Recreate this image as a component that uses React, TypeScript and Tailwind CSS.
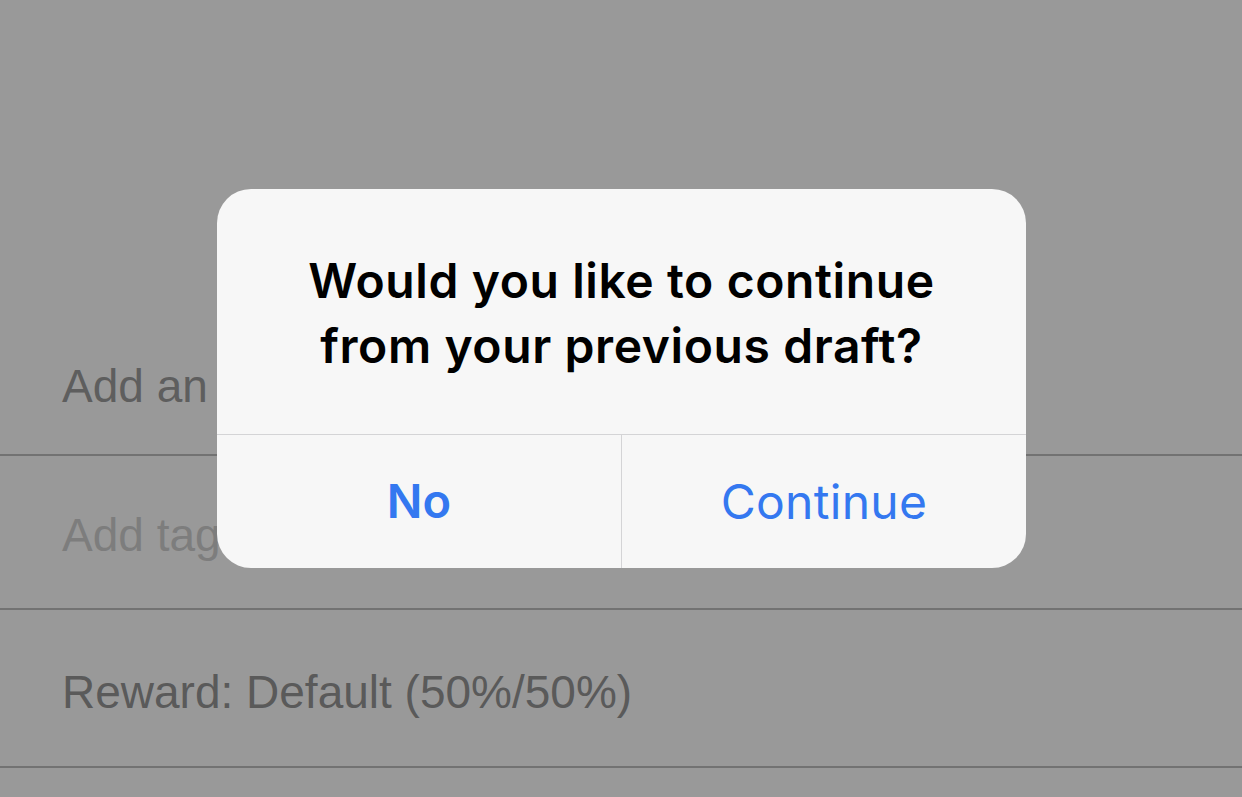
import React from 'react';

const rows = [
  { label: 'Add an', tone: 'text-[#5e5e5e]', h: 'h-[157px] pt-[18px]' },
  { label: 'Add tags', tone: 'text-[#7d7d7d]', h: 'h-[154px] pt-[6px]' },
  { label: 'Reward: Default (50%/50%)', tone: 'text-[#5a5a5a]', h: 'h-[158px] pt-[8px]' },
];

export default function App() {
  return (
    <div className="relative w-[1242px] h-[797px] overflow-hidden bg-[#999999] font-['Liberation_Sans',Arial,sans-serif]">
      {/* Form behind the alert */}
      <div className="flex flex-col pt-[299px]">
        {rows.map((row) => (
          <div
            key={row.label}
            className={`${row.h} flex items-center pl-[62px] border-b-2 border-[#727272] ${row.tone} text-[46px] leading-none`}
          >
            {row.label}
          </div>
        ))}
      </div>

      {/* Alert */}
      <div className="absolute left-[217px] top-[189px] w-[809px] h-[379px] rounded-[34px] bg-[#f7f7f7] flex flex-col overflow-hidden font-['Inter','Noto_Sans',sans-serif]">
        <div className="h-[246px] flex items-center justify-center border-b border-[#d4d4d6] pt-[2px]">
          <p className="text-center text-[48px] leading-[65px] font-semibold text-black tracking-[0.6px]">
            Would you like to continue
            <br />
            from your previous draft?
          </p>
        </div>
        <div className="flex-1 flex">
          <button className="flex-1 flex items-center justify-center text-[47px] font-semibold text-[#3478f0] border-r border-[#d4d4d6]">
            No
          </button>
          <button className="flex-1 flex items-center justify-center text-[48px] font-normal text-[#3478f0] tracking-[0.3px]">
            Continue
          </button>
        </div>
      </div>
    </div>
  );
}
